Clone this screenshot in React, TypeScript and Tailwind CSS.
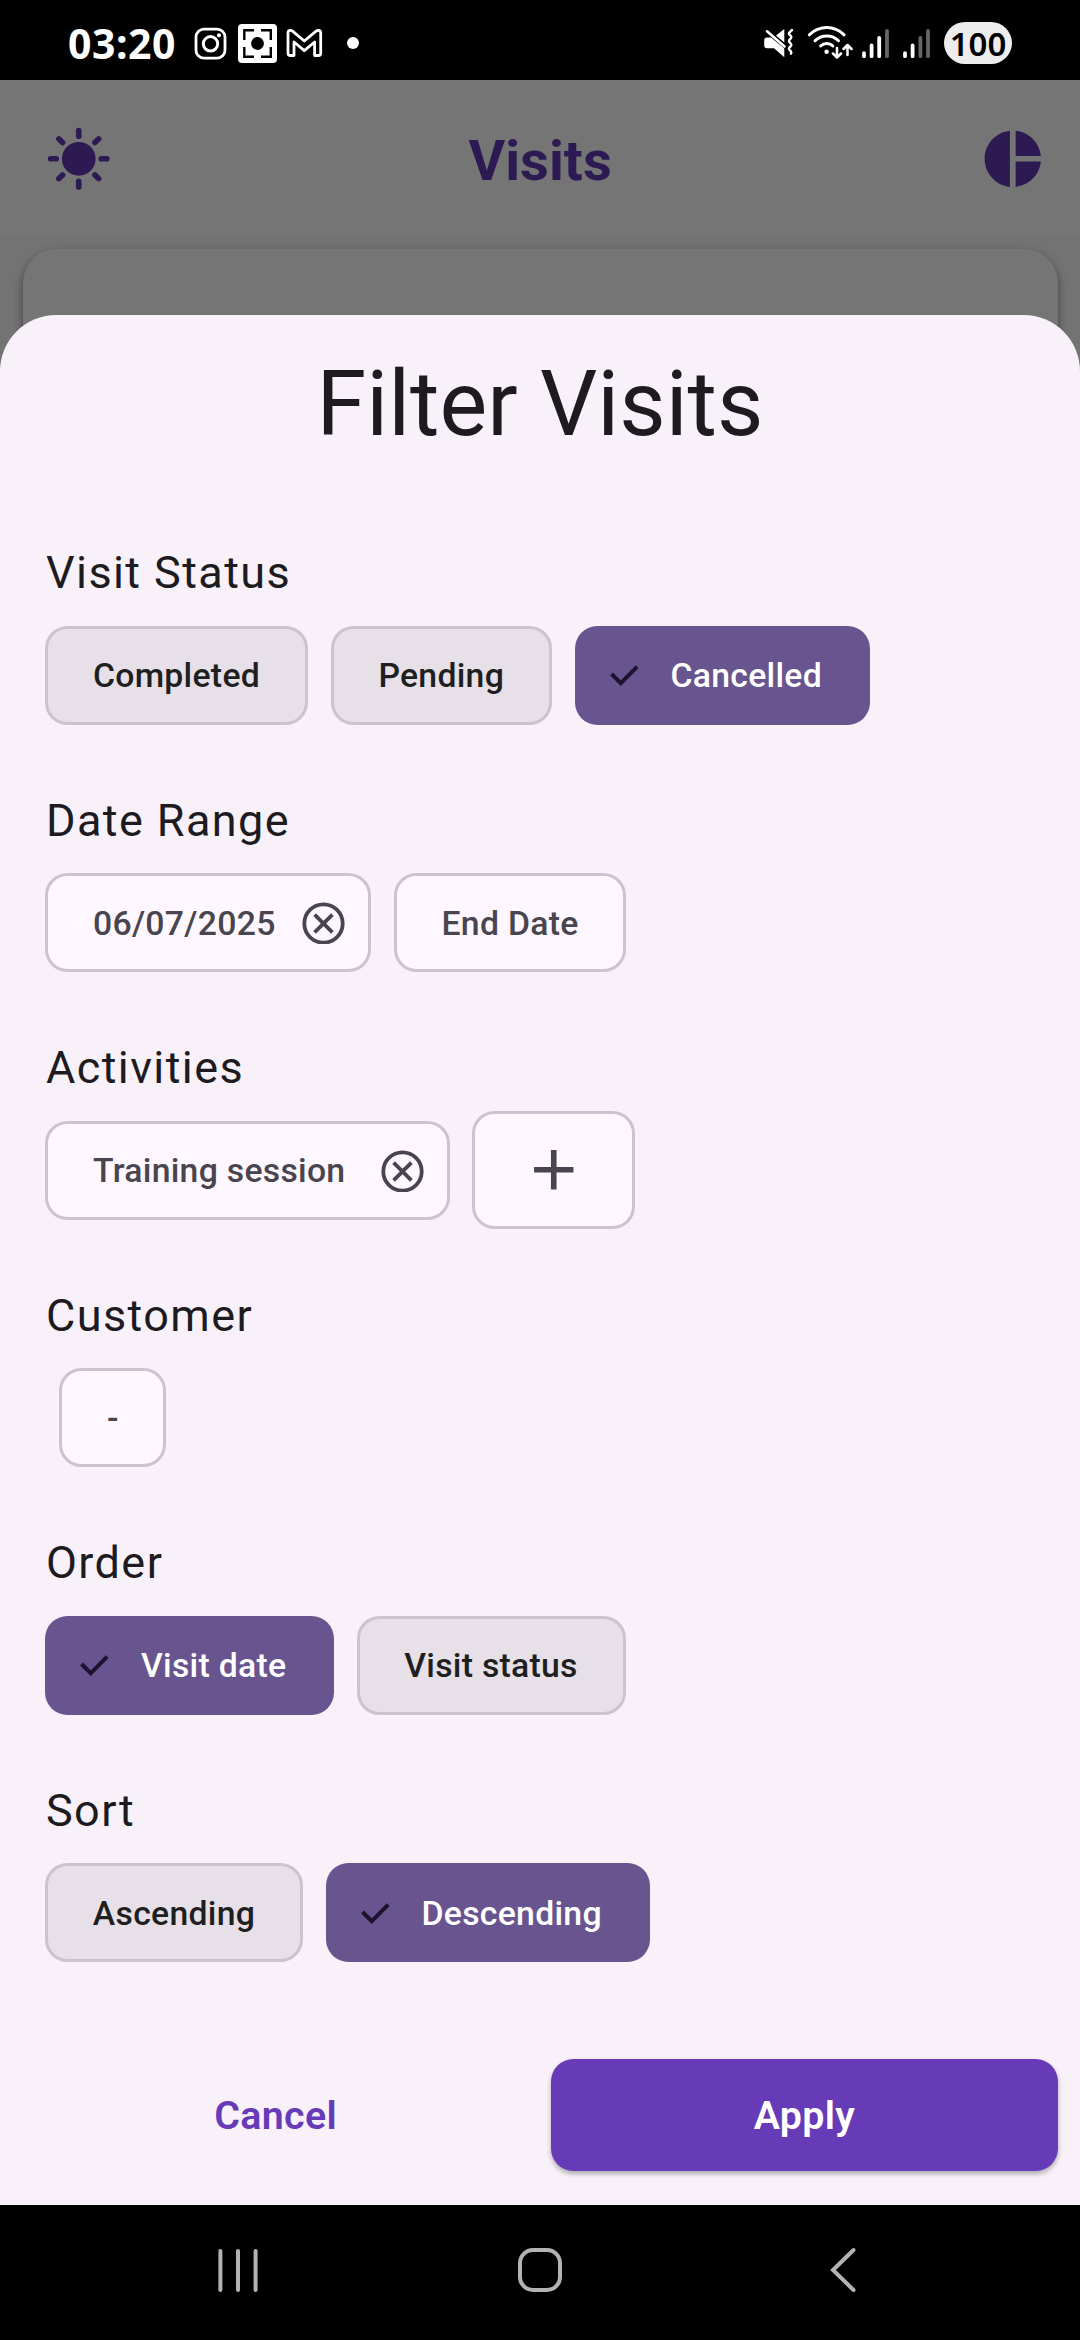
import type { ReactNode } from "react";

function StatusBar() {
  return (
    <div className="flex h-[80px] shrink-0 items-center justify-between bg-black pr-[68px] pl-[68px] text-white">
      <div className="flex h-full items-center pt-[6px]">
        <span className="w-[108px] font-['Noto_Sans',sans-serif] text-[41px] leading-none font-bold tracking-[0.5px] whitespace-nowrap">
          03:20
        </span>
        <svg className="ml-[18px] size-[33px]" viewBox="194 26.5 33 33" fill="none" stroke="currentColor">
          <rect x="196" y="28.7" width="29" height="29" rx="8" strokeWidth="2.8" />
          <circle cx="210.5" cy="43.3" r="7.2" strokeWidth="3" />
          <circle cx="219" cy="34.8" r="2" fill="currentColor" stroke="none" />
        </svg>
        <svg className="ml-[11px] size-[39px]" viewBox="238 24 39 39" fill="none">
          <rect x="238" y="24" width="39" height="39" rx="4" fill="white" />
          <circle cx="257.5" cy="43.5" r="6.4" fill="black" />
          <path d="M244.3 40V30.3H254M261 30.3h9.8V40M270.8 47v9.7H261M254 56.7h-9.7V47" stroke="black" strokeWidth="2.4" />
        </svg>
        <svg className="ml-[9px] h-[29px] w-[37px]" viewBox="286 28.5 37 29" fill="none" stroke="white" strokeWidth="2.8" strokeLinejoin="round">
          <path d="M288 32.5v20.2q0 2.3 2.3 2.3h3.7V41.5l10.3 8.6 10.3-8.6V55h3.8q2.3 0 2.3-2.3V32.5q0-2.6-2.4-2.6-1.2 0-2.2.8l-11.8 9.8-11.8-9.8q-1-.8-2.1-.8-2.4 0-2.4 2.6z" />
        </svg>
        <span className="ml-[24px] size-[12px] rounded-full bg-white" />
      </div>
      <div className="flex h-full items-center pt-[6px]">
        <svg className="h-[32px] w-[31px]" viewBox="763 27 31 32" fill="white">
          <path d="M784.3 29v13.5L776 35.5zM767 37.5h4L784.3 48.5V57.3L774 48.3h-7q-2.8 0-2.8-3v-4.8q0-3 2.8-3z" />
          <path d="M767 31.3L784.5 46.5" stroke="white" strokeWidth="2.6" strokeLinecap="round" />
          <path d="M792 30l-2.5 2.3q-1.2 1.2 0 2.3l1.4 1.4q1 1.2 0 2.3l-1.5 1.6q-1 1.2 0 2.3l1.5 1.5q1 1.2 0 2.3l-1.5 1.6q-1 1.2 0 2.2l1.5 1.6q1 1.2 0 2.3" fill="none" stroke="white" strokeWidth="2.4" strokeLinecap="round" />
        </svg>
        <svg className="ml-[13px] h-[36px] w-[46px]" viewBox="807 25 46 36" fill="none" stroke="white" strokeWidth="3" strokeLinecap="round" strokeLinejoin="round">
          <path d="M809.3 34.8Q817 27.6 826.8 27.6t17.3 7.2M815 40.8q5-4.9 11.8-4.9t11.7 4.9M820.6 46q2.6-2.6 6.2-2.6t6.1 2.6" />
          <circle cx="826.6" cy="51.7" r="2.2" fill="white" stroke="none" />
          <path d="M837 48v9.5m-4-4l4 4 4-4M847.5 55v-10m-4 4l4-4 4 4" strokeWidth="2.5" />
        </svg>
        <svg className="ml-[9px] h-[31px] w-[28px]" viewBox="862 27 28 31" stroke="white" strokeWidth="3.8" strokeLinecap="round">
          <path d="M864 52.2v3M871.6 44.5v10.7M879.2 37v18.2" />
          <path d="M887 30v25.2" className="stroke-[#666666]" />
        </svg>
        <svg className="ml-[13px] h-[31px] w-[28px]" viewBox="903 27 28 31" stroke="white" strokeWidth="3.8" strokeLinecap="round">
          <path d="M905 52.2v3M912.6 44.5v10.7" />
          <path d="M920.4 37v18.2M928 30v25.2" className="stroke-[#666666]" />
        </svg>
        <span className="ml-[13px] flex h-[42px] w-[68px] items-center justify-center rounded-full bg-[#ededed] font-['Noto_Sans',sans-serif] text-[33px] leading-none font-semibold text-black">
          100
        </span>
      </div>
    </div>
  );
}

function AppBar() {
  return (
    <div className="flex h-[157px] shrink-0 items-center justify-between pr-[33.75px] pl-[45px] text-[#2e1a53]">
      <svg className="size-[67.5px]" viewBox="0 0 24 24" fill="currentColor">
        <circle cx="12" cy="12" r="6" />
        <g stroke="currentColor" strokeWidth="2" strokeLinecap="round">
          <path d="M12 2v2M12 20v2M2 12h2M20 12h2M4.93 4.93l1.32 1.32M17.75 17.75l1.32 1.32M4.93 19.07l1.32-1.32M17.75 6.25l1.32-1.32" />
        </g>
      </svg>
      <h1 className="mr-[11px] pt-[5px] text-[56.25px] leading-none font-bold">Visits</h1>
      <svg className="size-[67.5px]" viewBox="0 0 24 24" fill="currentColor">
        <path d="M11 2v20c-5.07-.5-9-4.79-9-10s3.93-9.5 9-10zm2.03 0v8.99H22c-.47-4.74-4.24-8.52-8.97-8.99zm0 11.01V22c4.74-.47 8.5-4.25 8.97-8.99h-8.97z" />
      </svg>
    </div>
  );
}

function Section({ label, children }: { label: string; children: ReactNode }) {
  return (
    <section className="mb-[45px]">
      <h3 className="h-[67.5px] pl-px text-[45px] leading-[65.5px] tracking-[1.4px]">{label}</h3>
      <div className="flex h-[135px] items-center gap-[22.5px]">{children}</div>
    </section>
  );
}

const chip = "flex h-[99px] shrink-0 items-center rounded-[22.5px] text-[33.75px] leading-none font-medium tracking-[0.28px] whitespace-nowrap";

function Choice({ label, width, selected = false }: { label: string; width: string; selected?: boolean }) {
  if (selected) {
    return (
      <button className={`${chip} ${width} bg-[#68548e] text-white`}>
        <svg className="ml-[34px] h-[24px] w-[32px] shrink-0" viewBox="0 0 32 24" fill="none" stroke="#1d1330" strokeWidth="4">
          <path d="M2.5 11l9.3 9.2L28.2 3.6" />
        </svg>
        <span className="ml-[30px] pt-[2px]">{label}</span>
      </button>
    );
  }
  return (
    <button className={`${chip} ${width} justify-center border-3 border-[#cbc4cf] bg-[#e7e0e8] text-[#1f1f1f]`}>
      <span className="pt-[2px]">{label}</span>
    </button>
  );
}

function Field({ label, width, clearable = false }: { label: string; width: string; clearable?: boolean }) {
  return (
    <button className={`${chip} ${width} justify-between border-3 border-[#cbc4cf] bg-[#fef7ff] pl-[45px] text-[#49454e]`}>
      <span className="pt-[2px]">{label}</span>
      {clearable && (
        <svg className="mr-[23px] size-[43px]" viewBox="-21.5 -22.5 43 43" fill="none" stroke="currentColor">
          <circle r="19.2" strokeWidth="3.8" />
          <path d="M-8.9-8.9L8.9 8.9M8.9-8.9L-8.9 8.9" strokeWidth="3.8" />
        </svg>
      )}
    </button>
  );
}

function FilterSheet() {
  return (
    <div className="relative -mt-[56px] flex h-[1890px] shrink-0 flex-col rounded-t-[56.25px] bg-[#f8f1fa] pt-[33.75px] text-[#1d1b20]">
      <h2 className="text-center text-[90px] leading-[112.5px]">Filter Visits</h2>
      <div className="mt-[78.75px] px-[45px]">
        <Section label="Visit Status">
          <Choice label="Completed" width="w-[263px]" />
          <Choice label="Pending" width="w-[221.5px]" />
          <Choice label="Cancelled" width="w-[295px]" selected />
        </Section>
        <Section label="Date Range">
          <Field label="06/07/2025" width="w-[326px]" clearable />
          <Field label="End Date" width="w-[232px]" />
        </Section>
        <Section label="Activities">
          <Field label="Training session" width="w-[404.5px]" clearable />
          <button className="flex h-[118px] w-[163px] items-center justify-center rounded-[22.5px] border-3 border-[#cbc4cf] bg-[#fef7ff] text-[#49454e]">
            <svg className="size-[67.5px]" viewBox="0 0 24 24" fill="currentColor">
              <path d="M19 13h-6v6h-2v-6H5v-2h6V5h2v6h6v2z" />
            </svg>
          </button>
        </Section>
        <Section label="Customer">
          <div className="ml-[14px]">
            <Field label="-" width="w-[107px]" />
          </div>
        </Section>
        <Section label="Order">
          <Choice label="Visit date" width="w-[289px]" selected />
          <Choice label="Visit status" width="w-[269px]" />
        </Section>
        <Section label="Sort">
          <Choice label="Ascending" width="w-[258px]" />
          <Choice label="Descending" width="w-[324.5px]" selected />
        </Section>
      </div>
      <div className="mt-auto mb-[33.75px] grid grid-cols-2 gap-[22.5px] px-[22.5px] text-[39.4px] font-semibold tracking-[0.28px]">
        <button className="h-[112.5px] pt-[2px] text-[#673ab7]">Cancel</button>
        <button className="h-[112.5px] rounded-[22.5px] bg-[#673ab7] pt-[2px] text-white shadow-[0_3px_5px_rgba(0,0,0,0.3)]">
          Apply
        </button>
      </div>
    </div>
  );
}

function NavBar() {
  return (
    <div className="flex h-[135px] shrink-0 items-center justify-between bg-black pr-[222px] pb-[5px] pl-[216px]">
      <svg className="h-[46px] w-[44px]" viewBox="0 0 44 46" stroke="#b3b3b3" strokeWidth="4" strokeLinecap="round">
        <path d="M4.4 4v39M22 4v39M39.6 4v39" />
      </svg>
      <svg className="mr-[8px] size-[48px]" viewBox="0 0 48 48" fill="none" stroke="#b3b3b3" strokeWidth="4">
        <rect x="4" y="4" width="40" height="40" rx="13" />
      </svg>
      <svg className="h-[48px] w-[30px]" viewBox="0 0 30 48" fill="none" stroke="#b3b3b3" strokeWidth="4" strokeLinecap="round">
        <path d="M25.500 4L5 24l20.500 20" />
      </svg>
    </div>
  );
}

export default function App() {
  return (
    <div className="flex h-[2340px] w-[1080px] flex-col overflow-hidden bg-[#757575] font-[Roboto,sans-serif]">
      <StatusBar />
      <AppBar />
      <div className="h-[134px] shrink-0 overflow-hidden bg-[#737373] px-[22.5px] pt-[11.5px]">
        <div className="h-[200px] rounded-[33.75px] bg-[#757575] shadow-[0_4px_10px_rgba(0,0,0,0.45)]" />
      </div>
      <FilterSheet />
      <NavBar />
    </div>
  );
}
